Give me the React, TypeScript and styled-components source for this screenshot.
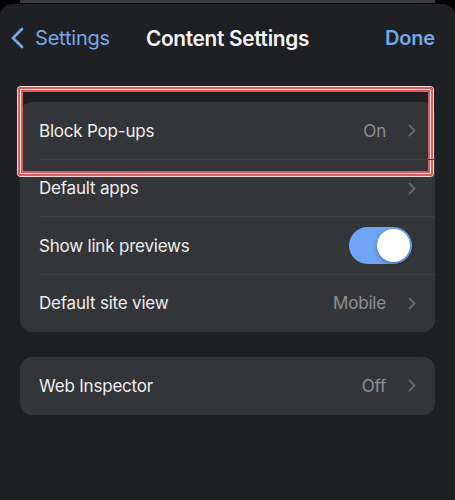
import React from "react";
import styled, { createGlobalStyle } from "styled-components";

const Global = createGlobalStyle`
  html, body { margin: 0; padding: 0; background: #000; }
  body { font-family: Inter, "Noto Sans", sans-serif; -webkit-font-smoothing: antialiased; }
`;

const Screen = styled.div`
  width: 455px;
  height: 500px;
  overflow: hidden;
  background: #000;
  display: flex;
  flex-direction: column;
`;

const BehindStrip = styled.div`
  height: 4px;
  padding: 0 20px;
  display: flex;
`;

const BehindBar = styled.div`
  flex: 1;
  height: 3px;
  background: #3a3b3f;
`;

const Sheet = styled.div`
  flex: 1;
  background: #1f2023;
  border-radius: 12px 12px 0 0;
  display: flex;
  flex-direction: column;
`;

const NavBar = styled.div`
  height: 68px;
  display: grid;
  grid-template-columns: 1fr auto 1fr;
  align-items: center;
  padding: 0 20px;
`;

const BackButton = styled.div`
  display: flex;
  align-items: center;
  gap: 11px;
  margin-left: -9px;
  color: #78a6ea;
  font-size: 20px;
  letter-spacing: -0.2px;
`;

const Title = styled.div`
  color: #f4f4f6;
  font-size: 20.8px;
  font-weight: 600;
  letter-spacing: -0.3px;
`;

const DoneButton = styled.div`
  justify-self: end;
  color: #78a6ea;
  font-size: 20px;
  font-weight: 600;
  letter-spacing: -0.2px;
`;

const Group = styled.div<{ $top: number }>`
  margin: ${(p) => p.$top}px 20px 0;
  background: #333538;
  border-radius: 12px;
  display: flex;
  flex-direction: column;
`;

const Row = styled.div<{ $sep?: boolean }>`
  position: relative;
  height: 57.5px;
  display: flex;
  align-items: center;
  padding: 0 19px;
  &::after {
    content: "";
    display: ${(p) => (p.$sep ? "block" : "none")};
    position: absolute;
    left: 19px;
    right: 0;
    bottom: 0;
    height: 1px;
    background: #3f4044;
  }
`;

const Label = styled.div`
  flex: 1;
  color: #eeeef0;
  font-size: 17px;
  letter-spacing: -0.2px;
`;

const Value = styled.div`
  color: #8d8e92;
  font-size: 17px;
  letter-spacing: -0.2px;
  margin-right: 22px;
`;

const Highlight = styled.div`
  position: absolute;
  top: -15px;
  left: -2px;
  right: 2px;
  bottom: -16px;
  border: 2px solid #dd5a5e;
  border-radius: 3px;
  box-shadow: 0 0 0 1px #f1d6d6, inset 0 0 0 1px #f4e4e4, inset 0 0 0 3px #dd5a5e;
  pointer-events: none;
`;

const Toggle = styled.div`
  width: 63px;
  height: 37px;
  border-radius: 19px;
  background: #6fa3f3;
  display: flex;
  align-items: center;
  justify-content: flex-end;
  padding: 0 2px;
  box-sizing: border-box;
  margin-right: 4px;
`;

const Knob = styled.div`
  width: 33px;
  height: 33px;
  border-radius: 50%;
  background: #fff;
  box-shadow: 0 2px 4px rgba(0, 0, 0, 0.25);
`;

const Chevron = () => (
  <svg width="8" height="13" viewBox="0 0 8 13">
    <path d="M1.5 1.5 L6.5 6.5 L1.5 11.5" fill="none" stroke="#66676b" strokeWidth="2" strokeLinecap="round" strokeLinejoin="round" />
  </svg>
);

const BackChevron = () => (
  <svg width="13" height="22" viewBox="0 0 13 22">
    <path d="M11 2 L2 11 L11 20" fill="none" stroke="#78a6ea" strokeWidth="2.8" strokeLinecap="round" strokeLinejoin="round" />
  </svg>
);

export default function App() {
  return (
    <>
      <Global />
      <Screen>
        <BehindStrip>
          <BehindBar />
        </BehindStrip>
        <Sheet>
          <NavBar>
            <BackButton>
              <BackChevron />
              Settings
            </BackButton>
            <Title>Content Settings</Title>
            <DoneButton>Done</DoneButton>
          </NavBar>
          <Group $top={30}>
            <Row $sep>
              <Label>Block Pop-ups</Label>
              <Value>On</Value>
              <Chevron />
              <Highlight />
            </Row>
            <Row $sep>
              <Label>Default apps</Label>
              <Chevron />
            </Row>
            <Row $sep>
              <Label>Show link previews</Label>
              <Toggle>
                <Knob />
              </Toggle>
            </Row>
            <Row>
              <Label>Default site view</Label>
              <Value>Mobile</Value>
              <Chevron />
            </Row>
          </Group>
          <Group $top={25}>
            <Row>
              <Label>Web Inspector</Label>
              <Value>Off</Value>
              <Chevron />
            </Row>
          </Group>
        </Sheet>
      </Screen>
    </>
  );
}
